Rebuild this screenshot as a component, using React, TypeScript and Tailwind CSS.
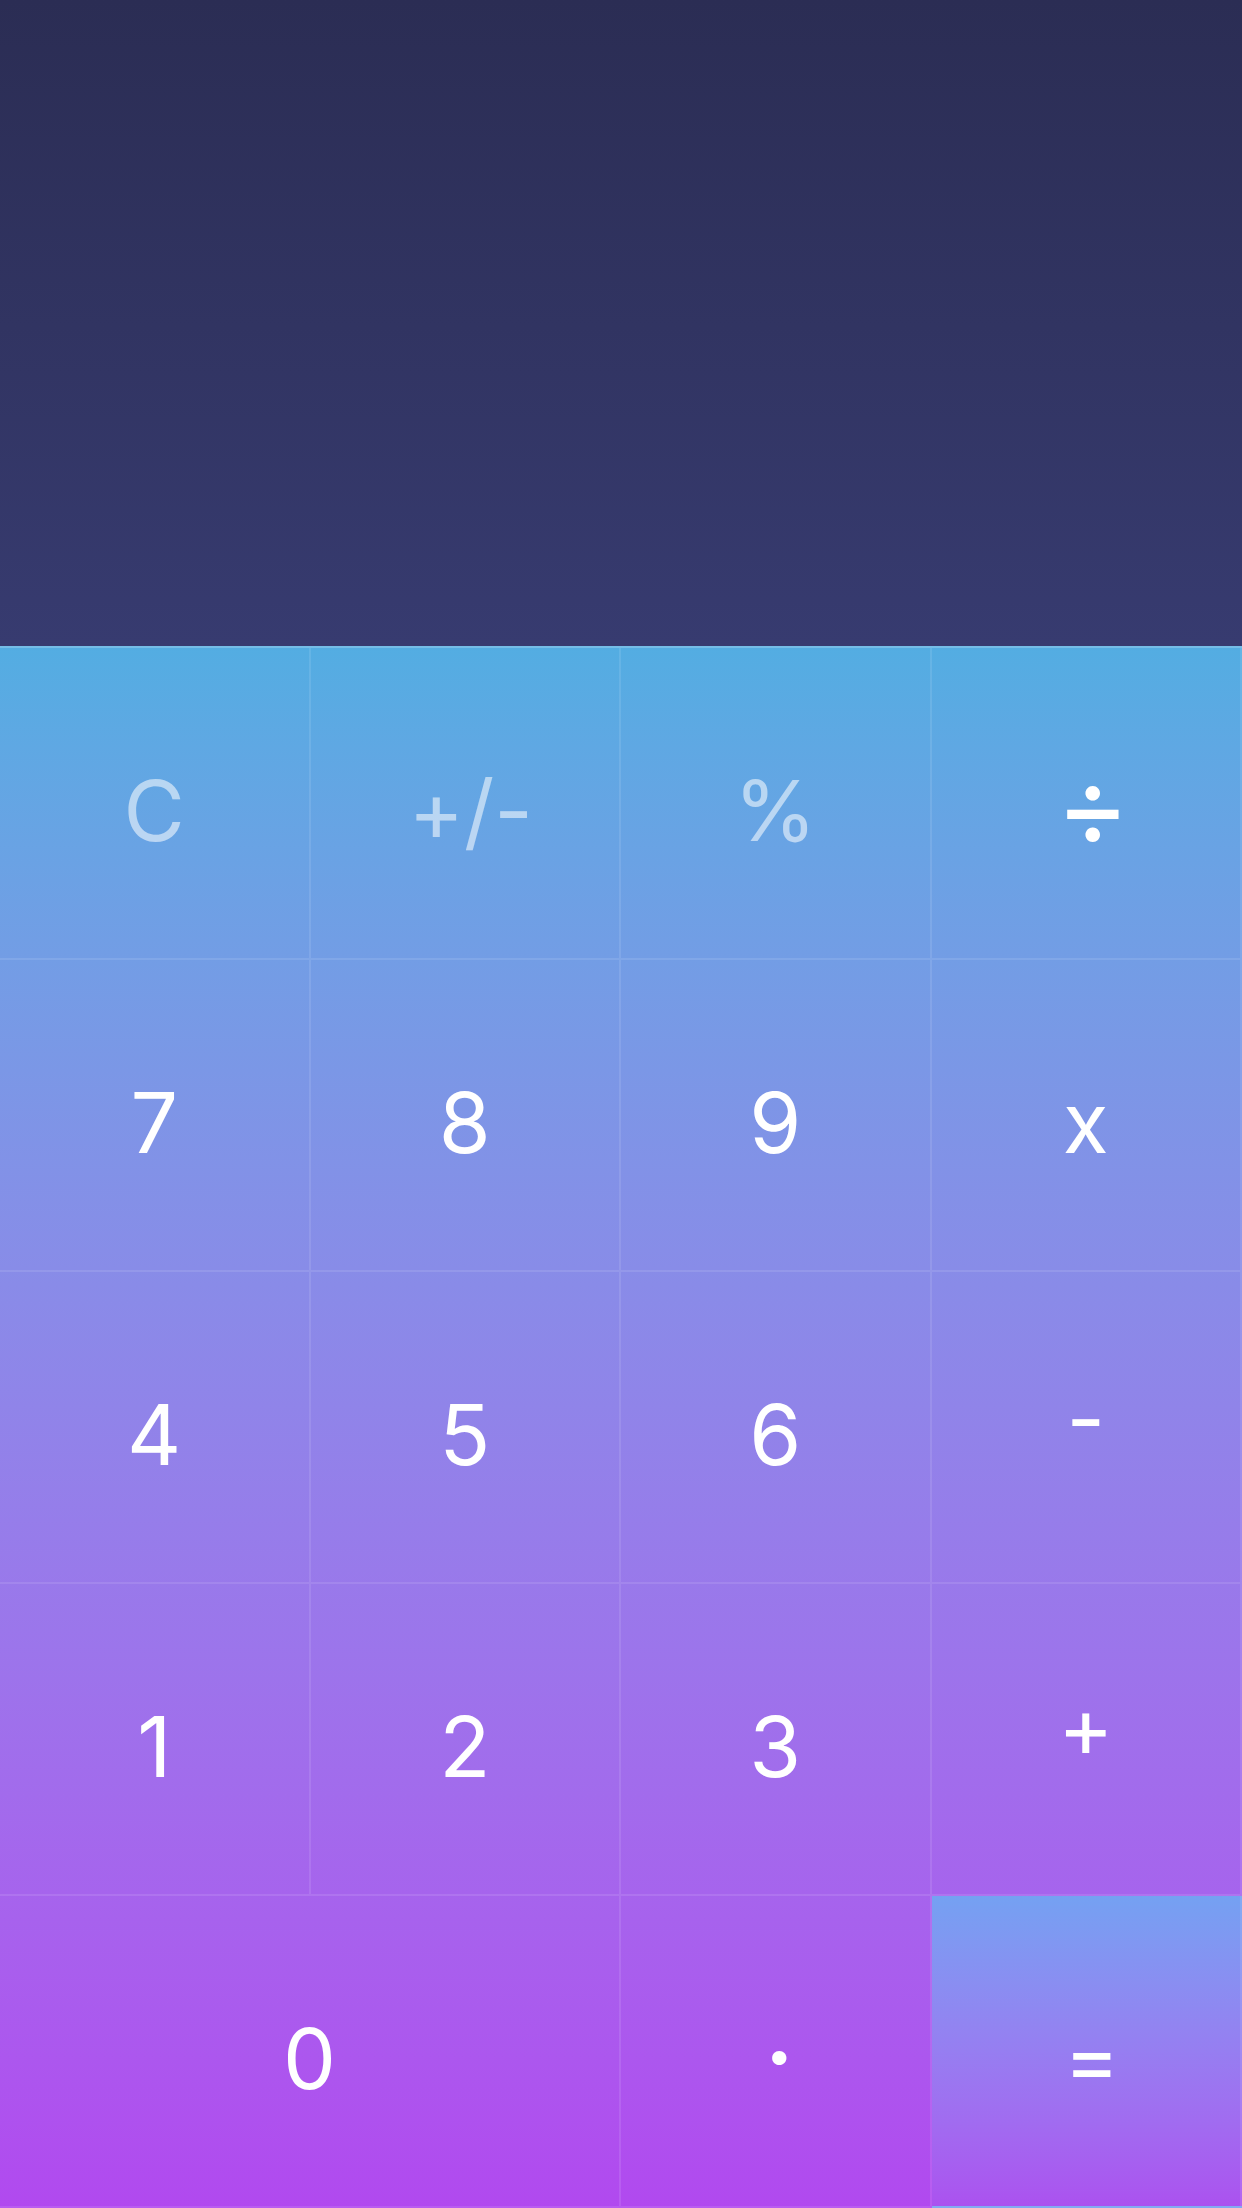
import clsx from 'clsx';

type Key = {
    label: string;
    span?: number;
    dim?: boolean;
    accent?: boolean;
};

const keys: Key[] = [
    { label: 'C', dim: true },
    { label: '+/-', dim: true },
    { label: '%', dim: true },
    { label: '÷' },
    { label: '7' },
    { label: '8' },
    { label: '9' },
    { label: 'x' },
    { label: '4' },
    { label: '5' },
    { label: '6' },
    { label: '-' },
    { label: '1' },
    { label: '2' },
    { label: '3' },
    { label: '+' },
    { label: '0', span: 2 },
    { label: '·' },
    { label: '=', accent: true },
];

// per-glyph nudges so the symbols sit where the design has them
const nudge: Record<string, string> = {
    '÷': 'text-[112px] -mt-3 ml-[14px]',
    '+/-': 'ml-3',
    '-': '-mt-8',
    '+': '-mt-10',
    '·': 'font-bold ml-[8px] -mt-1',
    '=': 'ml-[12px]',
};

export default function App() {
    return (
        <div className="flex h-[2208px] w-[1242px] flex-col overflow-hidden font-['Inter','Liberation_Sans',sans-serif]">
            {/* display */}
            <div className="h-[646px] shrink-0 bg-linear-to-b from-[#2b2d54] to-[#373b70]" />

            {/* keypad */}
            <div className="grid flex-1 grid-cols-4 grid-rows-5 border-t-2 border-white/20 bg-linear-to-b from-[#53ade2] to-[#b149ef] bg-origin-border">
                {keys.map((key, i) => (
                    <div
                        key={i}
                        className={clsx(
                            'flex items-center justify-center border-b-2 border-r-2 border-white/10 pt-4 text-[84px] leading-none text-white',
                            key.span === 2 && 'col-span-2',
                            key.dim && 'text-white/55',
                            key.accent && 'border-0 bg-linear-to-b from-[#74a1f2] to-[#ab52ef]',
                            i % 4 === 3 && 'border-r-0',
                            i >= 16 && 'border-b-0',
                        )}
                    >
                        <span className={nudge[key.label]}>{key.label}</span>
                    </div>
                ))}
            </div>
        </div>
    );
}
